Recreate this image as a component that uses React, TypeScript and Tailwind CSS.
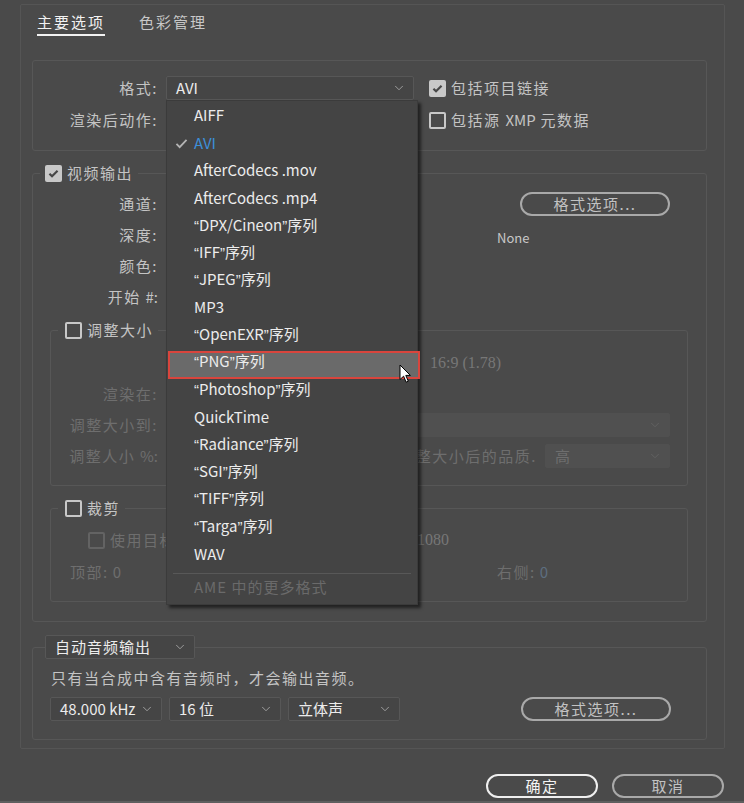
import React from "react";
import clsx from "clsx";
import { ChevronDown } from "lucide-react";

const formats = [
  "AIFF",
  "AVI",
  "AfterCodecs .mov",
  "AfterCodecs .mp4",
  "“DPX/Cineon”序列",
  "“IFF”序列",
  "“JPEG”序列",
  "MP3",
  "“OpenEXR”序列",
  "“PNG”序列",
  "“Photoshop”序列",
  "QuickTime",
  "“Radiance”序列",
  "“SGI”序列",
  "“TIFF”序列",
  "“Targa”序列",
  "WAV",
];

const label = "text-[15px] tracking-[1.5px] leading-6 text-right shrink-0 whitespace-nowrap";

// chinese font draws the curly quotes full width, so give them a latin face
const withQuotes = (s: string) =>
  s.split(/([“”])/).map((part, i) =>
    part === "“" || part === "”" ? (
      <span key={i} className="font-['Liberation_Sans',sans-serif]">
        {part}
      </span>
    ) : (
      <React.Fragment key={i}>{part}</React.Fragment>
    )
  );

const CheckBox = ({ on, dim }: { on?: boolean; dim?: boolean }) =>
  on ? (
    <span className="w-[17px] h-[17px] rounded-[2px] bg-[#c8c8c8] flex items-center justify-center shrink-0">
      <svg viewBox="0 0 16 16" className="w-[13px] h-[13px]">
        <path d="M3 8.2l3.2 3.3L13 4.5" stroke="#474747" strokeWidth="2.6" fill="none" />
      </svg>
    </span>
  ) : (
    <span
      className={clsx(
        "w-[17px] h-[17px] rounded-[2px] border-2 shrink-0",
        dim ? "border-[#636363]" : "border-[#c8c8c8]"
      )}
    />
  );

const Select = ({
  value,
  className,
  dim,
}: {
  value?: string;
  className?: string;
  dim?: boolean;
}) => (
  <div
    className={clsx(
      "h-6 flex items-center justify-between pl-[9px] pr-[7px] rounded-[2px] border shrink-0",
      dim
        ? "bg-[#505050] border-[#505050] text-[#6e6e6e]"
        : "bg-[#454545] border-[#575757] text-[#ececec]",
      className
    )}
  >
    <span className="text-[15px] leading-6 whitespace-nowrap">{value}</span>
    <ChevronDown size={14} strokeWidth={1.3} className={dim ? "text-[#666]" : "text-[#b8b8b8]"} />
  </div>
);

const PillButton = ({ text, className }: { text: string; className?: string }) => (
  <div
    className={clsx(
      "h-6 rounded-full border-2 border-[#a9a9a9] flex items-center justify-center text-[15px] tracking-[1.5px] text-[#c2c2c2] shrink-0",
      className
    )}
  >
    {text}
  </div>
);

const Cursor = () => (
  <svg width="13" height="20" viewBox="0 0 13 20" className="absolute left-[399px] top-[364px]">
    <path
      d="M1 1 L1 15.5 L4.6 12.2 L7.1 18.2 L9.3 17.2 L6.8 11.4 L11.4 11.4 Z"
      fill="#fff"
      stroke="#000"
      strokeWidth="1"
      strokeLinejoin="round"
    />
  </svg>
);

const FormatMenu = () => (
  <div className="absolute left-[166px] top-[100px] w-[252px] h-[505px] bg-[#444444] border border-[#3b3b3b] shadow-[3px_3px_3px_rgba(0,0,0,0.55)] pt-px">
    <div className="absolute left-px top-[250px] w-[252px] h-[28px] bg-[#6a6a6a] border-2 border-[#d9453d]" />
    {formats.map((f) => (
      <div key={f} className="relative h-[27.4px] flex items-center text-[15px] whitespace-nowrap">
        <span className="w-[27px] flex justify-center shrink-0">
          {f === "AVI" && (
            <svg viewBox="0 0 14 12" className="w-[13px] h-[11px] ml-[2px]">
              <path d="M1.5 6.5l3.5 3.5L12.5 2" stroke="#b4b4b4" strokeWidth="2" fill="none" />
            </svg>
          )}
        </span>
        <span className={f === "AVI" ? "text-[#3d8fd8]" : "text-[#ececec]"}>{withQuotes(f)}</span>
      </div>
    ))}
    <div className="mx-[6px] mt-[5px] h-px bg-[#585858]" />
    <div className="h-[27.4px] flex items-center pl-[27px] text-[15px] tracking-[1px] text-[#6a6a6a]">
      AME 中的更多格式
    </div>
  </div>
);

export default function App() {
  return (
    <div className="w-[744px] h-[803px] bg-[#4a4a4a] relative overflow-hidden flex flex-col font-['Noto_Sans_CJK_SC',sans-serif] text-[#c4c4c4]">
      <div className="ml-[20px] mt-[4px] w-[705px] h-[745px] border border-[#555555] rounded-[2px] pl-[11px] pr-[17px]">
        {/* tabs */}
        <div className="flex gap-[34px] pl-[5px] mt-[7px]">
          <div className="text-[15px] tracking-[2px] leading-5 text-[#f2f2f2] pb-[2px] border-b-2 border-[#f2f2f2]">
            主要选项
          </div>
          <div className="text-[15px] tracking-[2px] leading-5 text-[#c8c8c8]">色彩管理</div>
        </div>

        {/* format section */}
        <div className="mt-[24px] h-[91px] border border-[#575757] rounded-[3px] pt-[15px]">
          <div className="flex items-center h-6">
            <span className={clsx(label, "w-[125px]")}>格式:</span>
            <Select value="AVI" className="ml-[8px] w-[248px]" />
            <span className="ml-[15px] flex items-center gap-[5px]">
              <CheckBox on />
              <span className="text-[15px] tracking-[1.5px]">包括项目链接</span>
            </span>
          </div>
          <div className="flex items-center h-6 mt-[8px]">
            <span className={clsx(label, "w-[125px]")}>渲染后动作:</span>
            <Select className="ml-[8px] w-[248px]" />
            <span className="ml-[15px] flex items-center gap-[5px]">
              <CheckBox />
              <span className="text-[15px] tracking-[1.5px]">
                包括源 <span className="tracking-normal">XMP</span> 元数据
              </span>
            </span>
          </div>
        </div>

        {/* video output */}
        <fieldset className="mt-[12px] border border-[#575757] rounded-[3px] pt-[9px] pb-[19px]">
          <legend className="ml-[7px] px-[5px] h-5 flex items-center gap-[5px]">
            <CheckBox on />
            <span className="text-[15px] tracking-[1.5px] leading-5">视频输出</span>
          </legend>

          <div className="flex items-center h-6">
            <span className={clsx(label, "w-[125px]")}>通道:</span>
            <div className="flex-1" />
            <PillButton text="格式选项..." className="w-[150px] mr-[36px]" />
          </div>
          <div className="flex items-center h-6 mt-[7px]">
            <span className={clsx(label, "w-[125px]")}>深度:</span>
            <span className="ml-[339px] mt-[6px] text-[13px] text-[#c8c8c8]">None</span>
          </div>
          <div className="flex items-center h-6 mt-[7px]">
            <span className={clsx(label, "w-[125px]")}>颜色:</span>
          </div>
          <div className="flex items-center h-6 mt-[7px]">
            <span className={clsx(label, "w-[125px]")}>
              开始 <span className="tracking-normal">#:</span>
            </span>
          </div>

          {/* resize */}
          <fieldset className="mt-[11px] ml-[17px] mr-[18px] border border-[#575757] rounded-[3px] pt-[11px] pb-[17px]">
            <legend className="ml-[7px] pl-[7px] pr-[5px] h-5 flex items-center gap-[5px]">
              <CheckBox />
              <span className="text-[15px] tracking-[1.5px] leading-5">调整大小</span>
            </legend>
            <div className="flex items-center h-6 text-[#6e6e6e]">
              <span className="ml-[379px] font-['Liberation_Serif',serif] text-[16px] text-[#777]">
                16:9 (1.78)
              </span>
            </div>
            <div className="flex items-center h-6 mt-[7px] text-[#6e6e6e]">
              <span className={clsx(label, "w-[107px]")}>渲染在:</span>
            </div>
            <div className="flex items-center h-6 mt-[7px] text-[#6e6e6e]">
              <span className={clsx(label, "w-[107px]")}>调整大小到:</span>
              <Select dim className="ml-[142px] w-[370px]" />
            </div>
            <div className="flex items-center h-6 mt-[7px] text-[#6e6e6e]">
              <span className={clsx(label, "w-[107px]")}>
                调整人小 <span className="tracking-normal">%:</span>
              </span>
              <span className={clsx(label, "w-[132px] ml-[247px]")}>整大小后的品质.</span>
              <Select dim value="高" className="ml-[8px] w-[125px]" />
            </div>
          </fieldset>

          {/* crop */}
          <fieldset className="mt-[12px] ml-[17px] mr-[18px] border border-[#575757] rounded-[3px] pt-[10px] pb-[17px]">
            <legend className="ml-[7px] pl-[7px] pr-[5px] h-5 flex items-center gap-[5px]">
              <CheckBox />
              <span className="text-[15px] tracking-[1.5px] leading-5">裁剪</span>
            </legend>
            <div className="flex items-center h-6 text-[#6e6e6e]">
              <span className="ml-[37px] flex items-center gap-[5px]">
                <CheckBox dim />
                <span className="text-[15px] tracking-[1.5px]">使用目标</span>
              </span>
              <span className="ml-[241px] font-['Liberation_Serif',serif] text-[16px] text-[#777]">1080</span>
            </div>
            <div className="flex items-center h-6 mt-[8px] ml-[19px] text-[15px] text-[#6e6e6e]">
              <span className="w-[427px] shrink-0">
                <span className="tracking-[1.5px]">顶部:</span>
                <span className="ml-[4px]">0</span>
              </span>
              <span>
                <span className="tracking-[1.5px]">右侧:</span>
                <span className="ml-[4px] text-[#5d6e80]">0</span>
              </span>
            </div>
          </fieldset>
        </fieldset>

        {/* audio */}
        <fieldset className="mt-[13px] border border-[#575757] rounded-[3px] pt-[9px] pb-[18px] pl-[17px]">
          <legend className="ml-[-5px]">
            <Select value="自动音频输出" className="w-[150px] tracking-[1px]" />
          </legend>
          <div className="ml-px text-[15px] tracking-[1.5px] leading-5">
            只有当合成中含有音频时，才会输出音频。
          </div>
          <div className="flex items-center mt-[9px] gap-[7px]">
            <Select value="48.000 kHz" className="w-[112px]" />
            <Select value="16 位" className="w-[112px]" />
            <Select value="立体声" className="w-[112px]" />
            <PillButton text="格式选项..." className="w-[150px] ml-[114px]" />
          </div>
        </fieldset>
      </div>

      {/* dialog buttons */}
      <div className="flex justify-end gap-[14px] pr-[20px] mt-[25px]">
        <PillButton text="确定" className="w-[112px] border-[#efefef] text-[#f4f4f4]" />
        <PillButton text="取消" className="w-[112px]" />
      </div>
      <div className="mt-auto h-[2px] bg-[#5e5e5e]" />

      <FormatMenu />
      <Cursor />
    </div>
  );
}
